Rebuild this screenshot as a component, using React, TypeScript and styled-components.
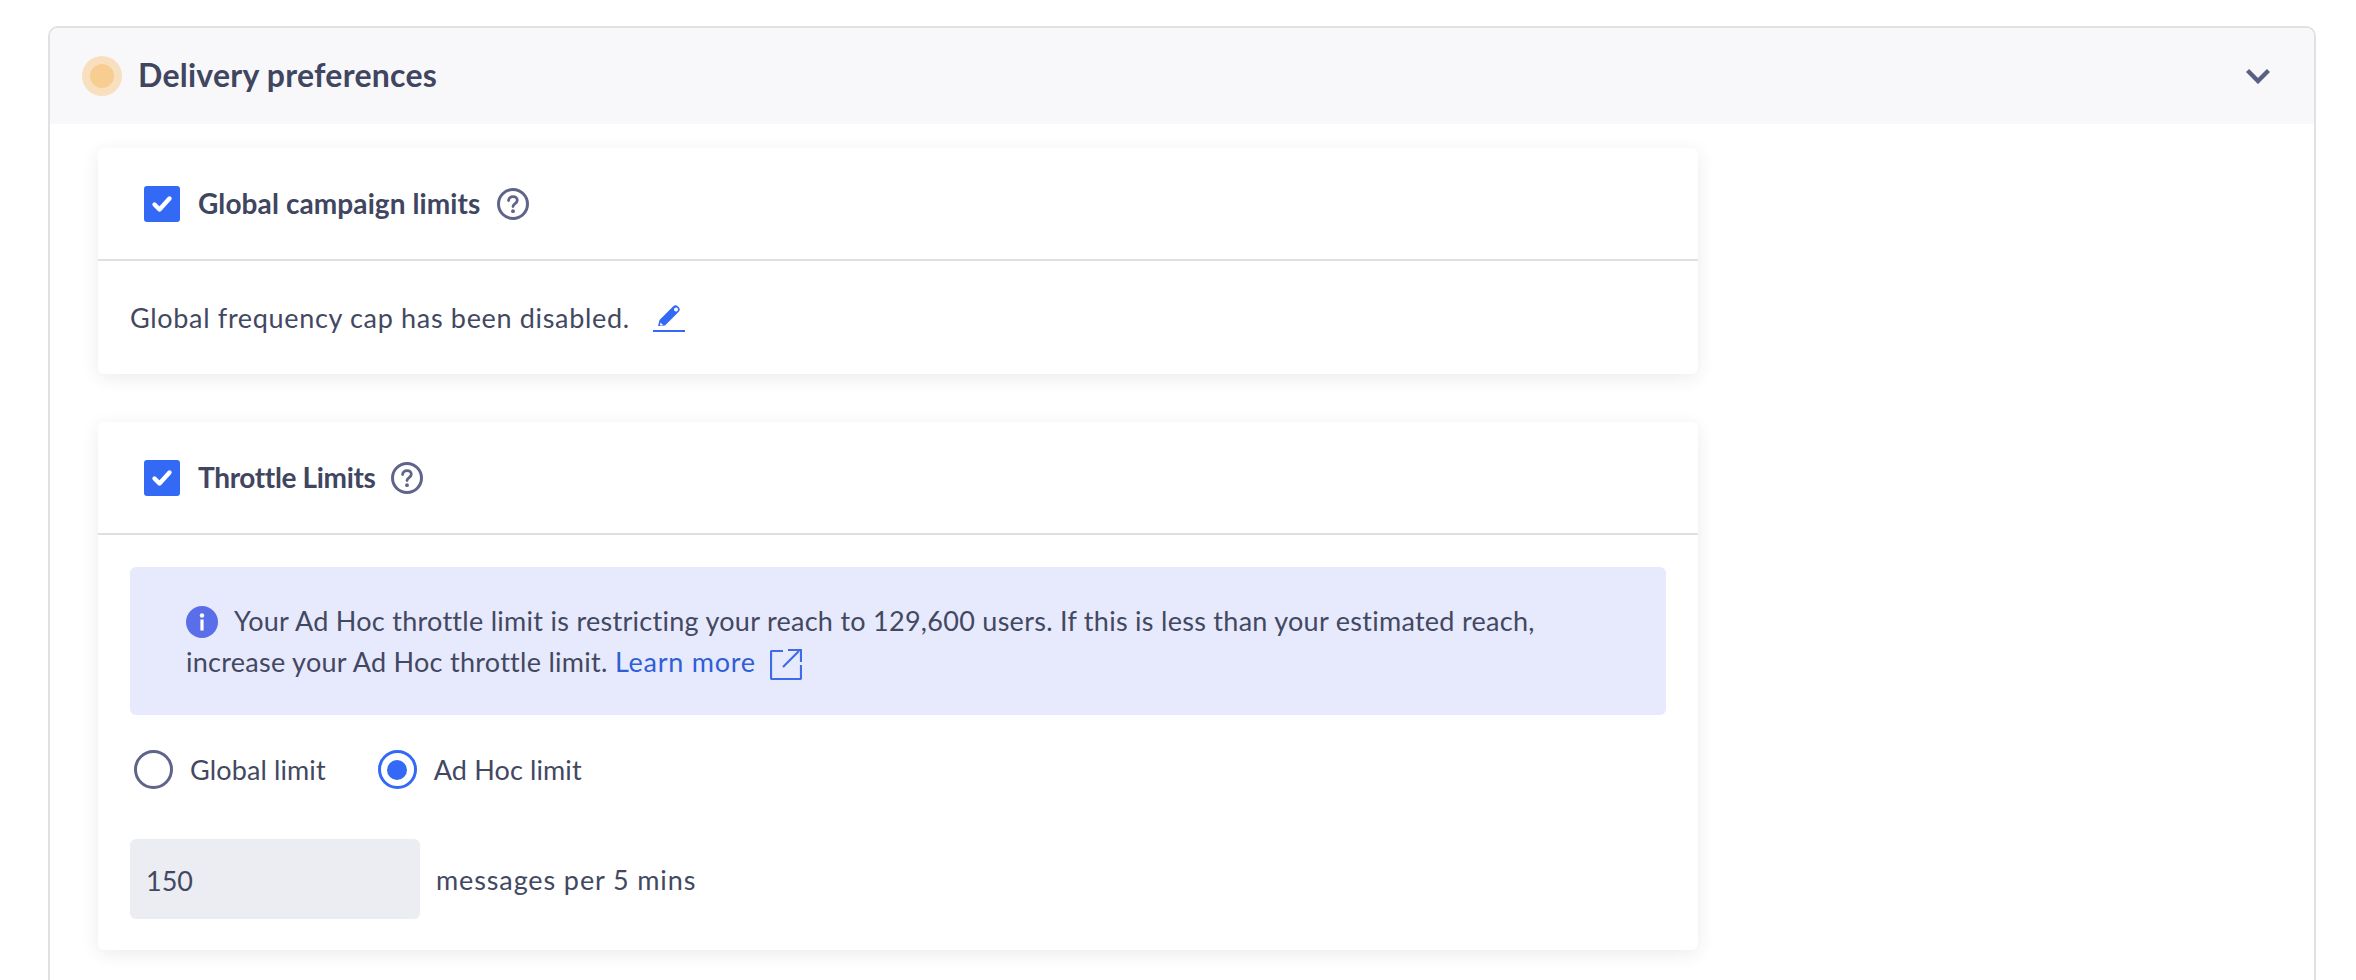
import React from 'react';
import styled, { createGlobalStyle } from 'styled-components';

const Global = createGlobalStyle`
  html, body { margin: 0; padding: 0; background: #fff; }
  body { font-family: Lato, "Open Sans", sans-serif; color: #434862; overflow: hidden; }
`;

const Page = styled.div`
  height: 980px;
  overflow: hidden;
  padding: 26px 40px 0 48px;
  box-sizing: border-box;
`;
const Panel = styled.section`
  border: 2px solid #e1e1e3;
  border-radius: 10px;
  height: 1100px;
  box-sizing: border-box;
  overflow: hidden;
`;
const PanelHeader = styled.header`
  height: 96px;
  background: #f8f8fb;
  display: flex;
  align-items: center;
  padding: 0 44px 0 32px;
  box-sizing: border-box;
`;
const Halo = styled.span`
  width: 40px;
  height: 40px;
  border-radius: 50%;
  background: #f8e0bf;
  display: flex;
  align-items: center;
  justify-content: center;
  flex: none;
  &::after {
    content: '';
    width: 24px;
    height: 24px;
    border-radius: 50%;
    background: #f8cd92;
  }
`;
const PanelTitle = styled.h2`
  margin: -3px 0 0 16px;
  font-size: 32px;
  font-weight: 700;
  line-height: 40px;
  color: #404560;
  letter-spacing: 0.25px;
  flex: 1;
`;
const PanelBody = styled.div`
  padding: 24px 0 0 48px;
  display: flex;
  flex-direction: column;
  gap: 48px;
`;
const Card = styled.div`
  width: 1600px;
  background: #fff;
  border-radius: 6px;
  box-shadow: 0 4px 18px rgba(40, 44, 80, 0.09);
`;
const CardHead = styled.div`
  height: 113px;
  border-bottom: 2px solid #dfdfe3;
  box-sizing: border-box;
  display: flex;
  align-items: center;
  padding: 0 0 0 46px;
`;
const CheckBox = styled.span`
  width: 36px;
  height: 36px;
  border-radius: 3px;
  background: #3369f5;
  display: flex;
  align-items: center;
  justify-content: center;
  flex: none;
`;
const CardTitle = styled.span<{ $sp: number }>`
  margin: -2px 0 0 18px;
  font-size: 28px;
  font-weight: 700;
  line-height: 36px;
  color: #404560;
  letter-spacing: ${p => p.$sp}px;
`;
const HelpWrap = styled.span`
  margin-left: 16px;
  display: flex;
`;
const TextLine = styled.div`
  display: flex;
  align-items: center;
  padding: 0 32px;
  height: 113px;
  box-sizing: border-box;
  font-size: 27px;
  line-height: 36px;
  letter-spacing: 0.67px;
`;
const PencilLink = styled.span`
  margin-left: 23px;
  display: flex;
`;
const ThrottleBody = styled.div`
  padding: 32px 32px 31px;
`;
const InfoBox = styled.div`
  background: #e7eafc;
  border-radius: 6px;
  height: 148px;
  box-sizing: border-box;
  padding: 33px 56px 0;
  font-size: 27px;
  line-height: 41px;
  letter-spacing: 0.28px;
`;
const InfoIcon = styled.svg`
  width: 32px;
  height: 32px;
  vertical-align: -7px;
  margin-right: 16px;
`;
const LearnMore = styled.span`
  color: #2f5fd8;
  letter-spacing: 0.75px;
`;
const ExternalIcon = styled.svg`
  width: 32px;
  height: 32px;
  vertical-align: -8px;
  margin-left: 14px;
`;
const RadioRow = styled.div`
  display: flex;
  align-items: center;
  margin-top: 36px;
  padding-left: 4px;
  height: 40px;
`;
const RadioItem = styled.label`
  display: flex;
  align-items: center;
  margin-right: 52px;
  font-size: 27px;
  letter-spacing: 0.12px;
  margin-top: -3px;
`;
const RadioDot = styled.span<{ $on?: boolean }>`
  width: 39px;
  height: 39px;
  box-sizing: border-box;
  border-radius: 50%;
  border: 3.5px solid ${p => (p.$on ? '#3369f5' : '#5f6488')};
  display: flex;
  align-items: center;
  justify-content: center;
  margin-right: 17px;
  &::after {
    content: '';
    display: ${p => (p.$on ? 'block' : 'none')};
    width: 20px;
    height: 20px;
    border-radius: 50%;
    background: #3369f5;
  }
`;
const InputRow = styled.div`
  display: flex;
  align-items: center;
  margin-top: 48px;
`;
const NumberBox = styled.div`
  width: 290px;
  height: 80px;
  background: #ecedf2;
  border-radius: 6px;
  box-sizing: border-box;
  padding: 2px 16px 0;
  display: flex;
  align-items: center;
  font-size: 27px;
`;
const Unit = styled.span`
  margin-left: 16px;
  font-size: 27px;
  letter-spacing: 0.88px;
`;

const Check = () => (
  <svg width="22" height="18" viewBox="0 0 22 18" fill="none">
    <path d="M3.5 9.5 L8.5 14.5 L18.5 3.5" stroke="#fff" strokeWidth="4.4" strokeLinecap="round" strokeLinejoin="round" />
  </svg>
);
const Help = () => (
  <HelpWrap>
    <svg width="32" height="32" viewBox="0 0 32 32" fill="none">
      <circle cx="16" cy="16" r="14.5" stroke="#5f6488" strokeWidth="3" />
      <path d="M11.6 12.6c0-2.4 1.9-4 4.4-4s4.3 1.5 4.3 3.7c0 3.3-4.3 3.2-4.3 6.2" stroke="#5f6488" strokeWidth="2.8" strokeLinecap="round" />
      <circle cx="16" cy="23.2" r="1.9" fill="#5f6488" />
    </svg>
  </HelpWrap>
);

export default function App() {
  return (
    <Page>
      <Global />
      <Panel>
        <PanelHeader>
          <Halo />
          <PanelTitle>Delivery preferences</PanelTitle>
          <svg width="24" height="16" viewBox="0 0 24 16" fill="none">
            <path d="M1.5 2.5 L12 13 L22.5 2.5" stroke="#5a5f85" strokeWidth="4.4" />
          </svg>
        </PanelHeader>
        <PanelBody>
          <Card>
            <CardHead>
              <CheckBox><Check /></CheckBox>
              <CardTitle $sp={0.1}>Global campaign limits</CardTitle>
              <Help />
            </CardHead>
            <TextLine>
              Global frequency cap has been disabled.
              <PencilLink>
                <svg width="32" height="30" viewBox="0 0 32 30" fill="none">
                  <path d="M5 23 L6.5 17 L20 3.5 a3.5 3.5 0 0 1 5 0 l0.5 0.5 a3.5 3.5 0 0 1 0 5 L12 22.5 Z" fill="#3369f5" />
                  <circle cx="23" cy="6.5" r="2" fill="#fff" />
                  <path d="M7.5 19.5 L10 22 L7 22.5 Z" fill="#fff" />
                  <rect x="0" y="27" width="32" height="2" fill="#3369f5" />
                </svg>
              </PencilLink>
            </TextLine>
          </Card>
          <Card>
            <CardHead>
              <CheckBox><Check /></CheckBox>
              <CardTitle $sp={-0.35}>Throttle Limits</CardTitle>
              <Help />
            </CardHead>
            <ThrottleBody>
              <InfoBox>
                <InfoIcon viewBox="0 0 32 32">
                  <circle cx="16" cy="16" r="16" fill="#5a6eea" />
                  <circle cx="16" cy="9.5" r="2.2" fill="#fff" />
                  <rect x="14.4" y="13.5" width="3.2" height="11" fill="#fff" />
                </InfoIcon>
                Your Ad Hoc throttle limit is restricting your reach to 129,600 users. If this is less than your estimated reach,
                <br />
                increase your Ad Hoc throttle limit. <LearnMore>Learn more</LearnMore>
                <ExternalIcon viewBox="0 0 32 32" fill="none">
                  <path d="M13 3 H2 a1 1 0 0 0 -1 1 V30 a1 1 0 0 0 1 1 H30 a1 1 0 0 0 1 -1 V17" stroke="#3f6bea" strokeWidth="2.2" />
                  <path d="M13 19 L29 3 M18 2 H31 V14" stroke="#3f6bea" strokeWidth="2.2" />
                </ExternalIcon>
              </InfoBox>
              <RadioRow>
                <RadioItem><RadioDot />Global limit</RadioItem>
                <RadioItem><RadioDot $on />Ad Hoc limit</RadioItem>
              </RadioRow>
              <InputRow>
                <NumberBox>150</NumberBox>
                <Unit>messages per 5 mins</Unit>
              </InputRow>
            </ThrottleBody>
          </Card>
        </PanelBody>
      </Panel>
    </Page>
  );
}
